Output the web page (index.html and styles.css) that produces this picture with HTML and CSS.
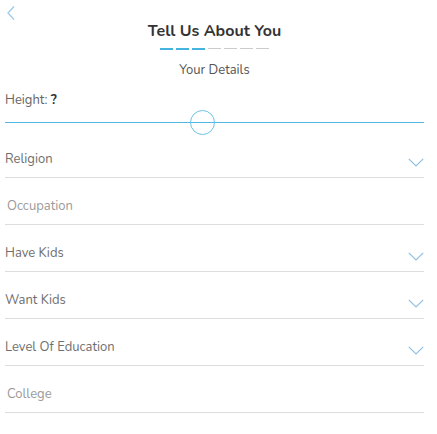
FILE: index.html
```html
<!DOCTYPE html>
<html>
<head>
<meta charset="utf-8">
<link rel="stylesheet" href="styles.css">
</head>
<body>
<div class="page">
  <div class="topbar">
    <button class="back" aria-label="Back">
      <svg width="10" height="16" viewBox="0 0 10 16"><path d="M8 1.5 L2 8 L8 14.5" fill="none" stroke="#9ccbe8" stroke-width="1.3"/></svg>
    </button>
  </div>
  <h1 class="title">Tell Us About You</h1>
  <div class="progress">
    <span class="dash on"></span><span class="dash on"></span><span class="dash on"></span><span class="dash"></span><span class="dash"></span><span class="dash"></span><span class="dash"></span>
  </div>
  <div class="subtitle">Your Details</div>

  <div class="height-label">Height: <b>?</b></div>
  <div class="slider">
    <div class="track"></div>
    <div class="thumb"></div>
  </div>

  <div class="field select first"><span class="label">Religion</span><svg class="chev" width="16" height="9" viewBox="0 0 16 9"><path d="M0.8 0.8 L8 8 L15.2 0.8" fill="none" stroke="#8fc0e2" stroke-width="1.2"/></svg></div>
  <div class="field input"><span class="placeholder">Occupation</span></div>
  <div class="field select"><span class="label">Have Kids</span><svg class="chev" width="16" height="9" viewBox="0 0 16 9"><path d="M0.8 0.8 L8 8 L15.2 0.8" fill="none" stroke="#8fc0e2" stroke-width="1.2"/></svg></div>
  <div class="field select"><span class="label">Want Kids</span><svg class="chev" width="16" height="9" viewBox="0 0 16 9"><path d="M0.8 0.8 L8 8 L15.2 0.8" fill="none" stroke="#8fc0e2" stroke-width="1.2"/></svg></div>
  <div class="field select"><span class="label">Level Of Education</span><svg class="chev" width="16" height="9" viewBox="0 0 16 9"><path d="M0.8 0.8 L8 8 L15.2 0.8" fill="none" stroke="#8fc0e2" stroke-width="1.2"/></svg></div>
  <div class="field input"><span class="placeholder">College</span></div>
</div>
</body>
</html>
```
FILE: styles.css
```css
* { box-sizing: border-box; }
html, body { margin: 0; padding: 0; background: #fff; }
body { font-family: "Nunito", "Noto Sans", "Open Sans", sans-serif; color: #666; }
.page { width: 437px; padding: 0 13px 0 5px; }
.topbar { height: 20px; display: flex; align-items: flex-start; }
.back { border: 0; background: none; padding: 0; margin: 5px 0 0 1px; display: flex; }
.title { margin: 0; text-align: center; font-size: 16px; line-height: 22px; font-weight: 700; color: #333; }
.progress { display: flex; justify-content: center; gap: 3px; margin-top: 5px; height: 3px; align-items: center; }
.dash { width: 13px; height: 1px; background: #ccc; }
.dash.on { height: 2px; background: #45b4e0; }
.subtitle { text-align: center; font-size: 13px; line-height: 18px; margin-top: 11px; color: #555; }
.height-label { font-size: 13px; line-height: 16px; margin-top: 13px; color: #666; }
.height-label b { color: #333; }
.slider { position: relative; height: 25px; margin-top: 2px; }
.track { position: absolute; left: 0; right: 0; top: 12px; height: 1px; background: #52b8e2; }
.thumb { position: absolute; left: 185px; top: 0; width: 25px; height: 25px; border-radius: 50%; border: 1px solid #6ec3e8; background: transparent; }
.field { height: 47px; display: flex; align-items: flex-end; justify-content: space-between; border-bottom: 1px solid #ddd; padding-bottom: 9px; font-size: 13px; line-height: 18px; }
.field.first { height: 43px; }
.select .label { color: #6f6f6f; }
.input .placeholder { color: #9a9a9a; padding-left: 2px; }
.chev { margin-bottom: 1px; }
```
